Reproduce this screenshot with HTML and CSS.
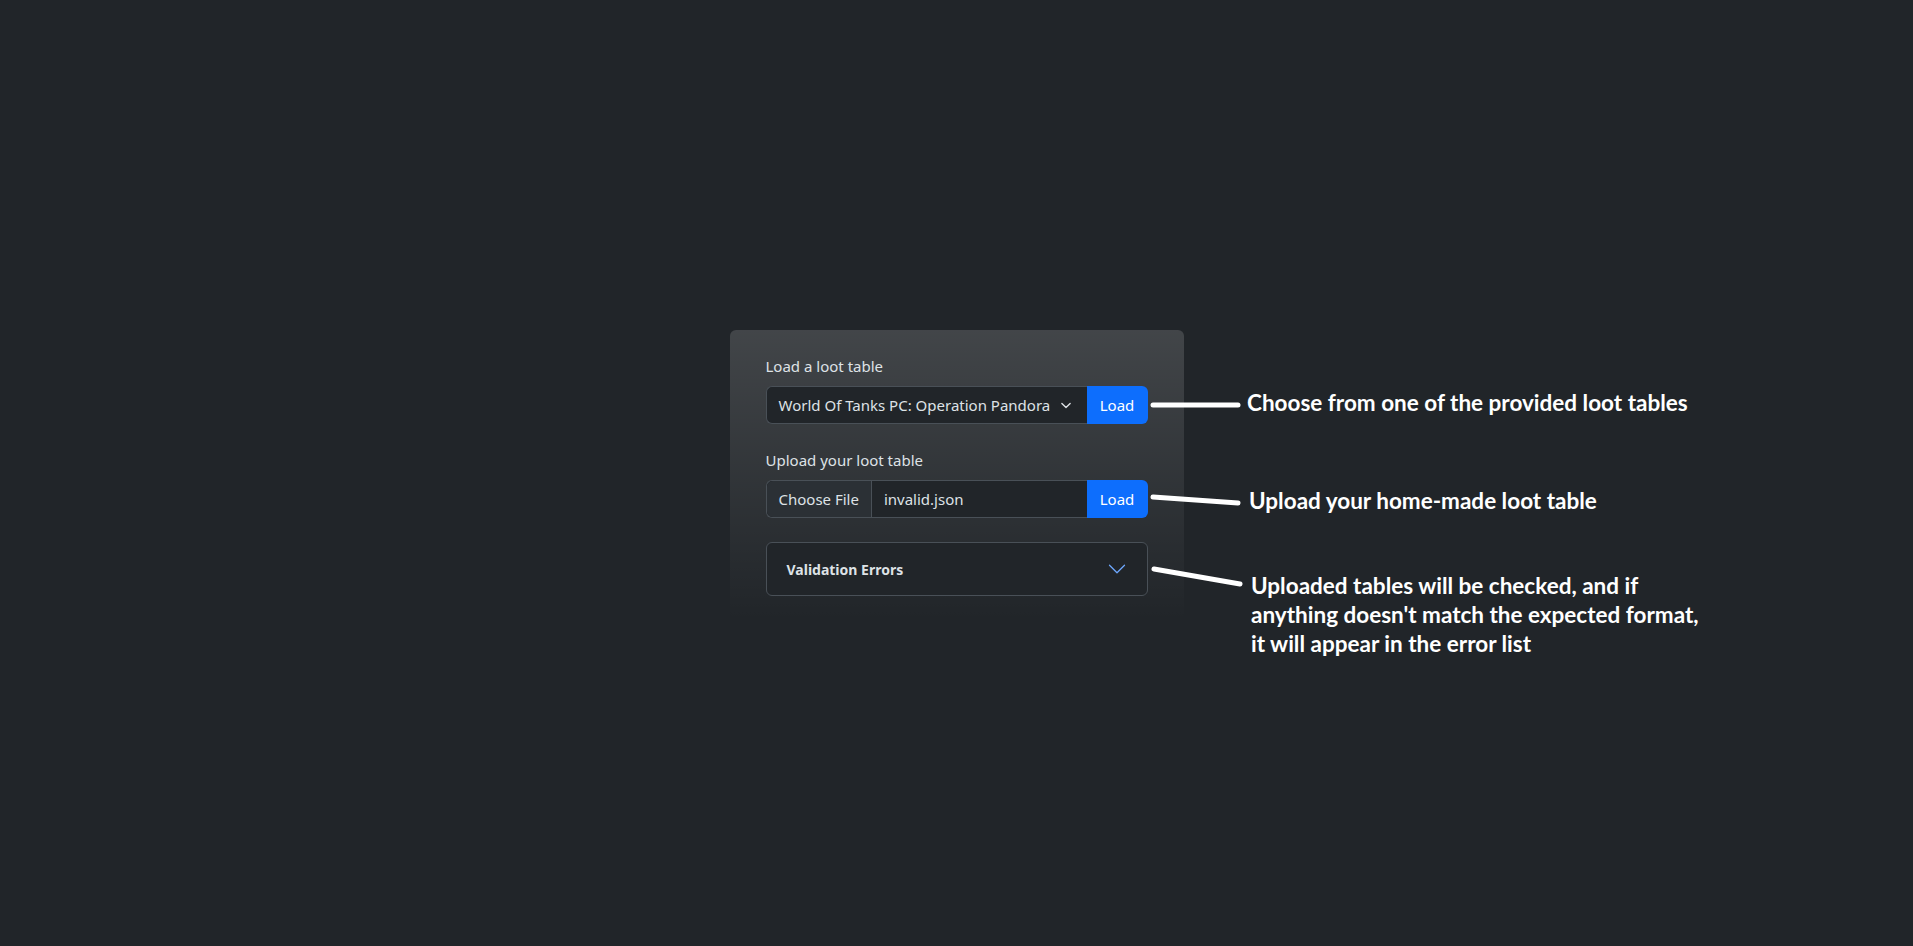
FILE: index.html
```html
<!DOCTYPE html>
<html lang="en">
<head>
<meta charset="utf-8">
<title>Loot table loader</title>
<link rel="stylesheet" href="styles.css">
</head>
<body>
<main class="stage">
  <section class="panel">
    <div class="field">
      <label class="field-label">Load a loot table</label>
      <div class="input-group">
        <div class="select">
          <span class="select-text">World Of Tanks PC: Operation Pandora</span>
          <svg class="select-arrow" viewBox="0 0 16 16" width="16" height="12"><path d="m2 5 6 6 6-6" fill="none" stroke="#dee2e6" stroke-width="2" stroke-linecap="round" stroke-linejoin="round"/></svg>
        </div>
        <button class="btn-load">Load</button>
      </div>
    </div>
    <div class="field">
      <label class="field-label">Upload your loot table</label>
      <div class="input-group">
        <div class="file">
          <span class="file-button">Choose File</span>
          <span class="file-name">invalid.json</span>
        </div>
        <button class="btn-load">Load</button>
      </div>
    </div>
    <div class="accordion">
      <div class="accordion-button">
        <span>Validation Errors</span>
        <svg class="accordion-icon" viewBox="0 0 16 16" width="20" height="20"><path fill="none" stroke="#6ea8fe" stroke-width="1" stroke-linecap="round" stroke-linejoin="round" d="M2 5 8 11 14 5"/></svg>
      </div>
    </div>
  </section>

  <div class="notes">
    <svg class="note-lines" width="120" height="200" viewBox="0 0 120 200">
      <g stroke="#fff" stroke-width="5" stroke-linecap="round" fill="none">
        <line x1="3" y1="15" x2="88" y2="15"/>
        <line x1="3" y1="107" x2="88" y2="113"/>
        <line x1="4" y1="179" x2="90" y2="194"/>
      </g>
    </svg>
    <p class="note note-1">Choose from one of the provided loot tables</p>
    <p class="note note-2">Upload your home-made loot table</p>
    <p class="note note-3">Uploaded tables will be checked, and if<br>anything doesn't match the expected format,<br>it will appear in the error list</p>
  </div>
</main>
</body>
</html>
```
FILE: styles.css
```css
* { box-sizing: border-box; }
html, body { margin: 0; height: 100%; }
body {
  background: #212529;
  color: #dee2e6;
  font-family: "Noto Sans", "Open Sans", sans-serif;
  font-size: 15px;
}
.stage {
  position: relative;
  height: 946px;
  display: flex;
  align-items: center;
  justify-content: center;
}
.panel {
  width: 454px;
  height: 290px;
  margin-top: 4px;
  padding: 24px 36px;
  border-radius: 6px;
  background: linear-gradient(180deg, rgba(255,255,255,0.15), rgba(255,255,255,0)) #212529;
  display: flex;
  flex-direction: column;
  gap: 24px;
}
.field { display: flex; flex-direction: column; gap: 8px; }
.field-label { line-height: 24px; color: #dee2e6; }
.input-group {
  display: flex;
  height: 38px;
}
.select, .file {
  flex: 1;
  display: flex;
  align-items: center;
  border: 1px solid #495057;
  border-right: none;
  border-radius: 6px 0 0 6px;
  background: #212529;
  min-width: 0;
}
.select { padding: 0 14px 0 12px; justify-content: space-between; }
.select-text { white-space: nowrap; }
.select-arrow { flex: none; width: 14px; height: 11px; }
.file-button {
  height: 100%;
  display: flex;
  align-items: center;
  padding: 0 12px;
  background: #2b3035;
  border-right: 1px solid #495057;
  border-radius: 6px 0 0 6px;
}
.file-name { padding: 0 12px; }
.btn-load {
  flex: none;
  width: 61px;
  border: none;
  border-radius: 0 6px 6px 0;
  background: #0d6efd;
  color: #fff;
  font: inherit;
  padding: 0;
}
.accordion {
  border: 1px solid #495057;
  border-radius: 6px;
  background: #212529;
}
.accordion-button {
  height: 52px;
  padding: 0 20px 0 20px;
  display: flex;
  align-items: center;
  justify-content: space-between;
  font-size: 14px;
  font-weight: 700;
  color: #dee2e6;
}
.accordion-icon { width: 20px; height: 20px; }

.notes {
  position: absolute;
  left: 1150px;
  top: 390px;
  width: 620px;
  height: 280px;
}
.note-lines { position: absolute; left: 0; top: 0; }
.note {
  position: absolute;
  margin: 0;
  color: #fff;
  font-family: "Lato", "Open Sans", sans-serif;
  font-weight: 700;
  font-size: 22.5px;
  line-height: 29px;
  white-space: nowrap;
}
.note-1 { left: 97px; top: -2px; }
.note-2 { left: 99px; top: 96px; }
.note-3 { left: 101px; top: 181px; }
```
